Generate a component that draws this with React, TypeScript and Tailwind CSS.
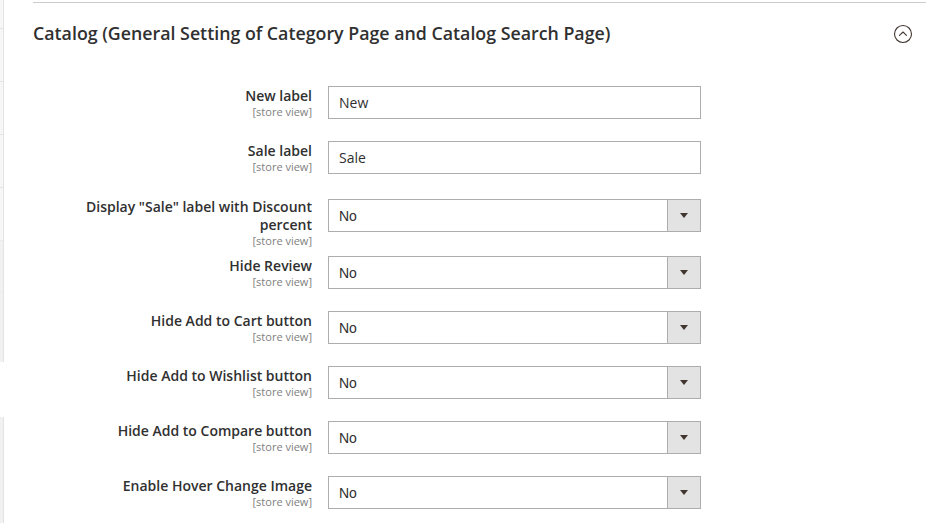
import React from 'react';

// Magento-style config section: catalog label settings
type Row = {
  label: string[];
  kind: 'text' | 'select';
  value: string;
  h: string;
  shift?: string;
};

const rows: Row[] = [
  { label: ['New label'], kind: 'text', value: 'New', h: 'h-[55px]' },
  { label: ['Sale label'], kind: 'text', value: 'Sale', h: 'h-[58px]' },
  { label: ['Display "Sale" label with Discount', 'percent'], kind: 'select', value: 'No', h: 'h-[57px]', shift: '-mt-[2px]' },
  { label: ['Hide Review'], kind: 'select', value: 'No', h: 'h-[55px]' },
  { label: ['Hide Add to Cart button'], kind: 'select', value: 'No', h: 'h-[55px]' },
  { label: ['Hide Add to Wishlist button'], kind: 'select', value: 'No', h: 'h-[55px]' },
  { label: ['Hide Add to Compare button'], kind: 'select', value: 'No', h: 'h-[55px]' },
  { label: ['Enable Hover Change Image'], kind: 'select', value: 'No', h: 'h-[55px]' },
];

const SideStrip: React.FC = () => (
  <div className="w-[4px] flex flex-col shrink-0">
    <div className="h-[362px] bg-[#f7f7f7] border-r border-[#e3e3e3] flex flex-col">
      <div className="h-[29px] border-b border-[#e3e3e3]" />
      <div className="h-[53px] border-b border-[#e3e3e3]" />
      <div className="h-[53px] border-b border-[#e3e3e3]" />
      <div className="h-[53px] border-b border-[#e3e3e3]" />
      <div className="h-[53px] border-b border-[#ececec]" />
      <div className="h-[51px] border-b border-[#ececec] bg-[#f1f1f1]" />
      <div className="flex-1 bg-[#f1f1f1]" />
    </div>
    <div className="h-[55px]" />
    <div className="flex-1 bg-[#f1f1f1] border-r border-[#e3e3e3]" />
  </div>
);

const CollapseIcon: React.FC = () => (
  <svg width="20" height="20" viewBox="0 0 20 20" fill="none">
    <circle cx="10" cy="10" r="8.5" stroke="#41362f" strokeWidth="1.1" />
    <path d="M6.5 11.3 L10 8 L13.5 11.3" stroke="#41362f" strokeWidth="1.1" strokeLinecap="round" strokeLinejoin="round" />
  </svg>
);

const Field: React.FC<{ row: Row }> = ({ row }) => {
  if (row.kind === 'text') {
    return (
      <div className="w-[373px] h-[33px] border border-[#adadad] bg-white flex items-center pl-[10px] text-[14px] text-[#303030] font-['Open_Sans',sans-serif]">
        {row.value}
      </div>
    );
  }
  return (
    <div className="w-[373px] h-[33px] border border-[#adadad] bg-white flex">
      <div className="flex-1 flex items-center pl-[10px] pt-[1px] text-[14px] text-[#303030] font-['Liberation_Sans',Arial,sans-serif]">
        {row.value}
      </div>
      <div className="w-[33px] bg-[#e3e3e3] border-l border-[#adadad] flex items-center justify-center">
        <svg width="8" height="5" viewBox="0 0 8 5">
          <path d="M0 0 H8 L4 5 Z" fill="#41362f" />
        </svg>
      </div>
    </div>
  );
};

export default function App() {
  return (
    <div className="w-[929px] h-[523px] bg-white flex overflow-hidden font-['Open_Sans',sans-serif]">
      <SideStrip />
      <div className="flex-1 pl-[29px] pr-[3px] pt-[2px]">
        <div className="border-t border-[#cccccc]">
          <div className="h-[63px] flex items-center justify-between pr-[13px] pb-[2px]">
            <h2 className="text-[17.8px] font-semibold text-[#303030]">
              Catalog (General Setting of Category Page and Catalog Search Page)
            </h2>
            <CollapseIcon />
          </div>
          <div className="pt-[20px] flex flex-col">
            {rows.map((row, i) => (
              <div key={i} className={`flex items-start gap-[16px] ${row.h}`}>
                <div className={`w-[279px] pt-[1px] text-right flex flex-col ${row.shift ?? ''}`}>
                  {row.label.map((l, j) => (
                    <span key={j} className="text-[14px] leading-[18px] font-semibold text-[#303030]">
                      {l}
                    </span>
                  ))}
                  <span className="text-[11px] leading-[14px] text-[#808080]">[store view]</span>
                </div>
                <Field row={row} />
              </div>
            ))}
          </div>
        </div>
      </div>
    </div>
  );
}
